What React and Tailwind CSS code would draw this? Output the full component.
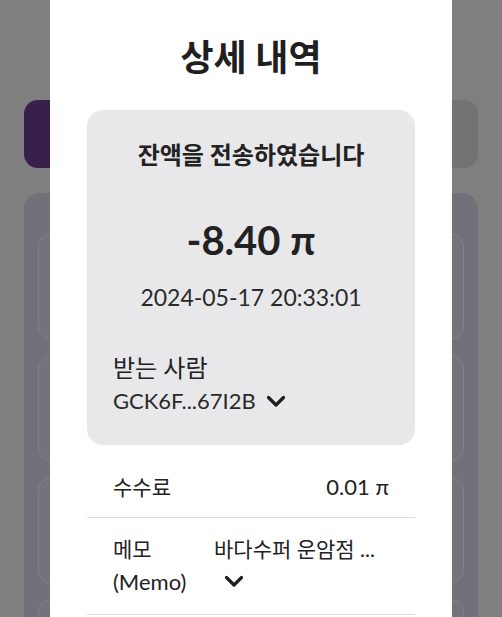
import React from 'react';

const Chevron = ({ className = '' }) => (
    <svg viewBox="0 0 20 13" className={className} fill="none" stroke="#1f1f1f" strokeWidth="3.2" strokeLinecap="round" strokeLinejoin="round">
        <path d="M2.5 2.5 L10 10 L17.5 2.5" />
    </svg>
);

export default function App() {
    return (
        <div className="relative h-[617px] w-[502px] overflow-hidden bg-[#7f7f7f] font-['Lato','Noto_Sans_CJK_KR',sans-serif] text-[#222]">

            {/* PAGE UNDER THE OVERLAY */}
            <div className="px-[24px] pt-[100px]">
                <div className="flex h-[68px] overflow-hidden rounded-[14px]">
                    <div className="w-1/2 bg-[#381f4c]"></div>
                    <div className="w-1/2 bg-[#737373]"></div>
                </div>
                <div className="mt-[25px] flex h-[500px] flex-col gap-[15px] rounded-t-[16px] bg-[#747079] px-[14px] pt-[40px]">
                    {[0, 1, 2, 3].map((i) => (
                        <div key={i} className="h-[107px] shrink-0 rounded-[14px] border border-[#848089] bg-[#76727a]"></div>
                    ))}
                </div>
            </div>

            {/* MODAL */}
            <div className="absolute left-[50px] top-0 h-full w-[402px] bg-white px-[37px] pt-[35px]">
                <h2 className="text-center text-[36px] font-bold leading-[44px] text-[#1f1f1f]">상세 내역</h2>

                {/* SUMMARY CARD */}
                <div className="mt-[31px] rounded-[16px] bg-[#e8e8ea] px-[26px] pb-[29px] pt-[30px]">
                    <p className="text-center text-[24px] font-bold leading-[30px]">잔액을 전송하였습니다</p>
                    <p className="mt-[46px] text-center text-[40px] font-bold leading-[48px]">-8.40 π</p>
                    <p className="mt-[18px] text-center text-[23px] leading-[30px] text-[#2a2a2a]">2024-05-17 20:33:01</p>
                    <p className="mt-[41px] text-[24px] leading-[30px]">받는 사람</p>
                    <div className="mt-[3px] flex items-center gap-[10px] text-[22px] leading-[30px] text-[#2a2a2a]">
                        <span>GCK6F...67I2B</span>
                        <Chevron className="h-[13px] w-[20px]" />
                    </div>
                </div>

                {/* FEE */}
                <div className="flex items-center justify-between border-b border-[#dcdcdc] px-[26px] pb-[16px] pt-[28px] text-[21px] leading-[28px]">
                    <span>수수료</span>
                    <span className="text-[22px]">0.01 π</span>
                </div>

                {/* MEMO */}
                <div className="flex border-b border-[#dcdcdc] px-[26px] pb-[16px] pt-[14px] text-[21px] leading-[33px]">
                    <div className="w-[101px] shrink-0">
                        <p>메모</p>
                        <p className="text-[22px]">(Memo)</p>
                    </div>
                    <div>
                        <p>바다수퍼 운암점 ...</p>
                        <div className="flex h-[33px] items-center pl-[10px]">
                            <Chevron className="h-[13px] w-[20px]" />
                        </div>
                    </div>
                </div>
            </div>
        </div>
    );
}
